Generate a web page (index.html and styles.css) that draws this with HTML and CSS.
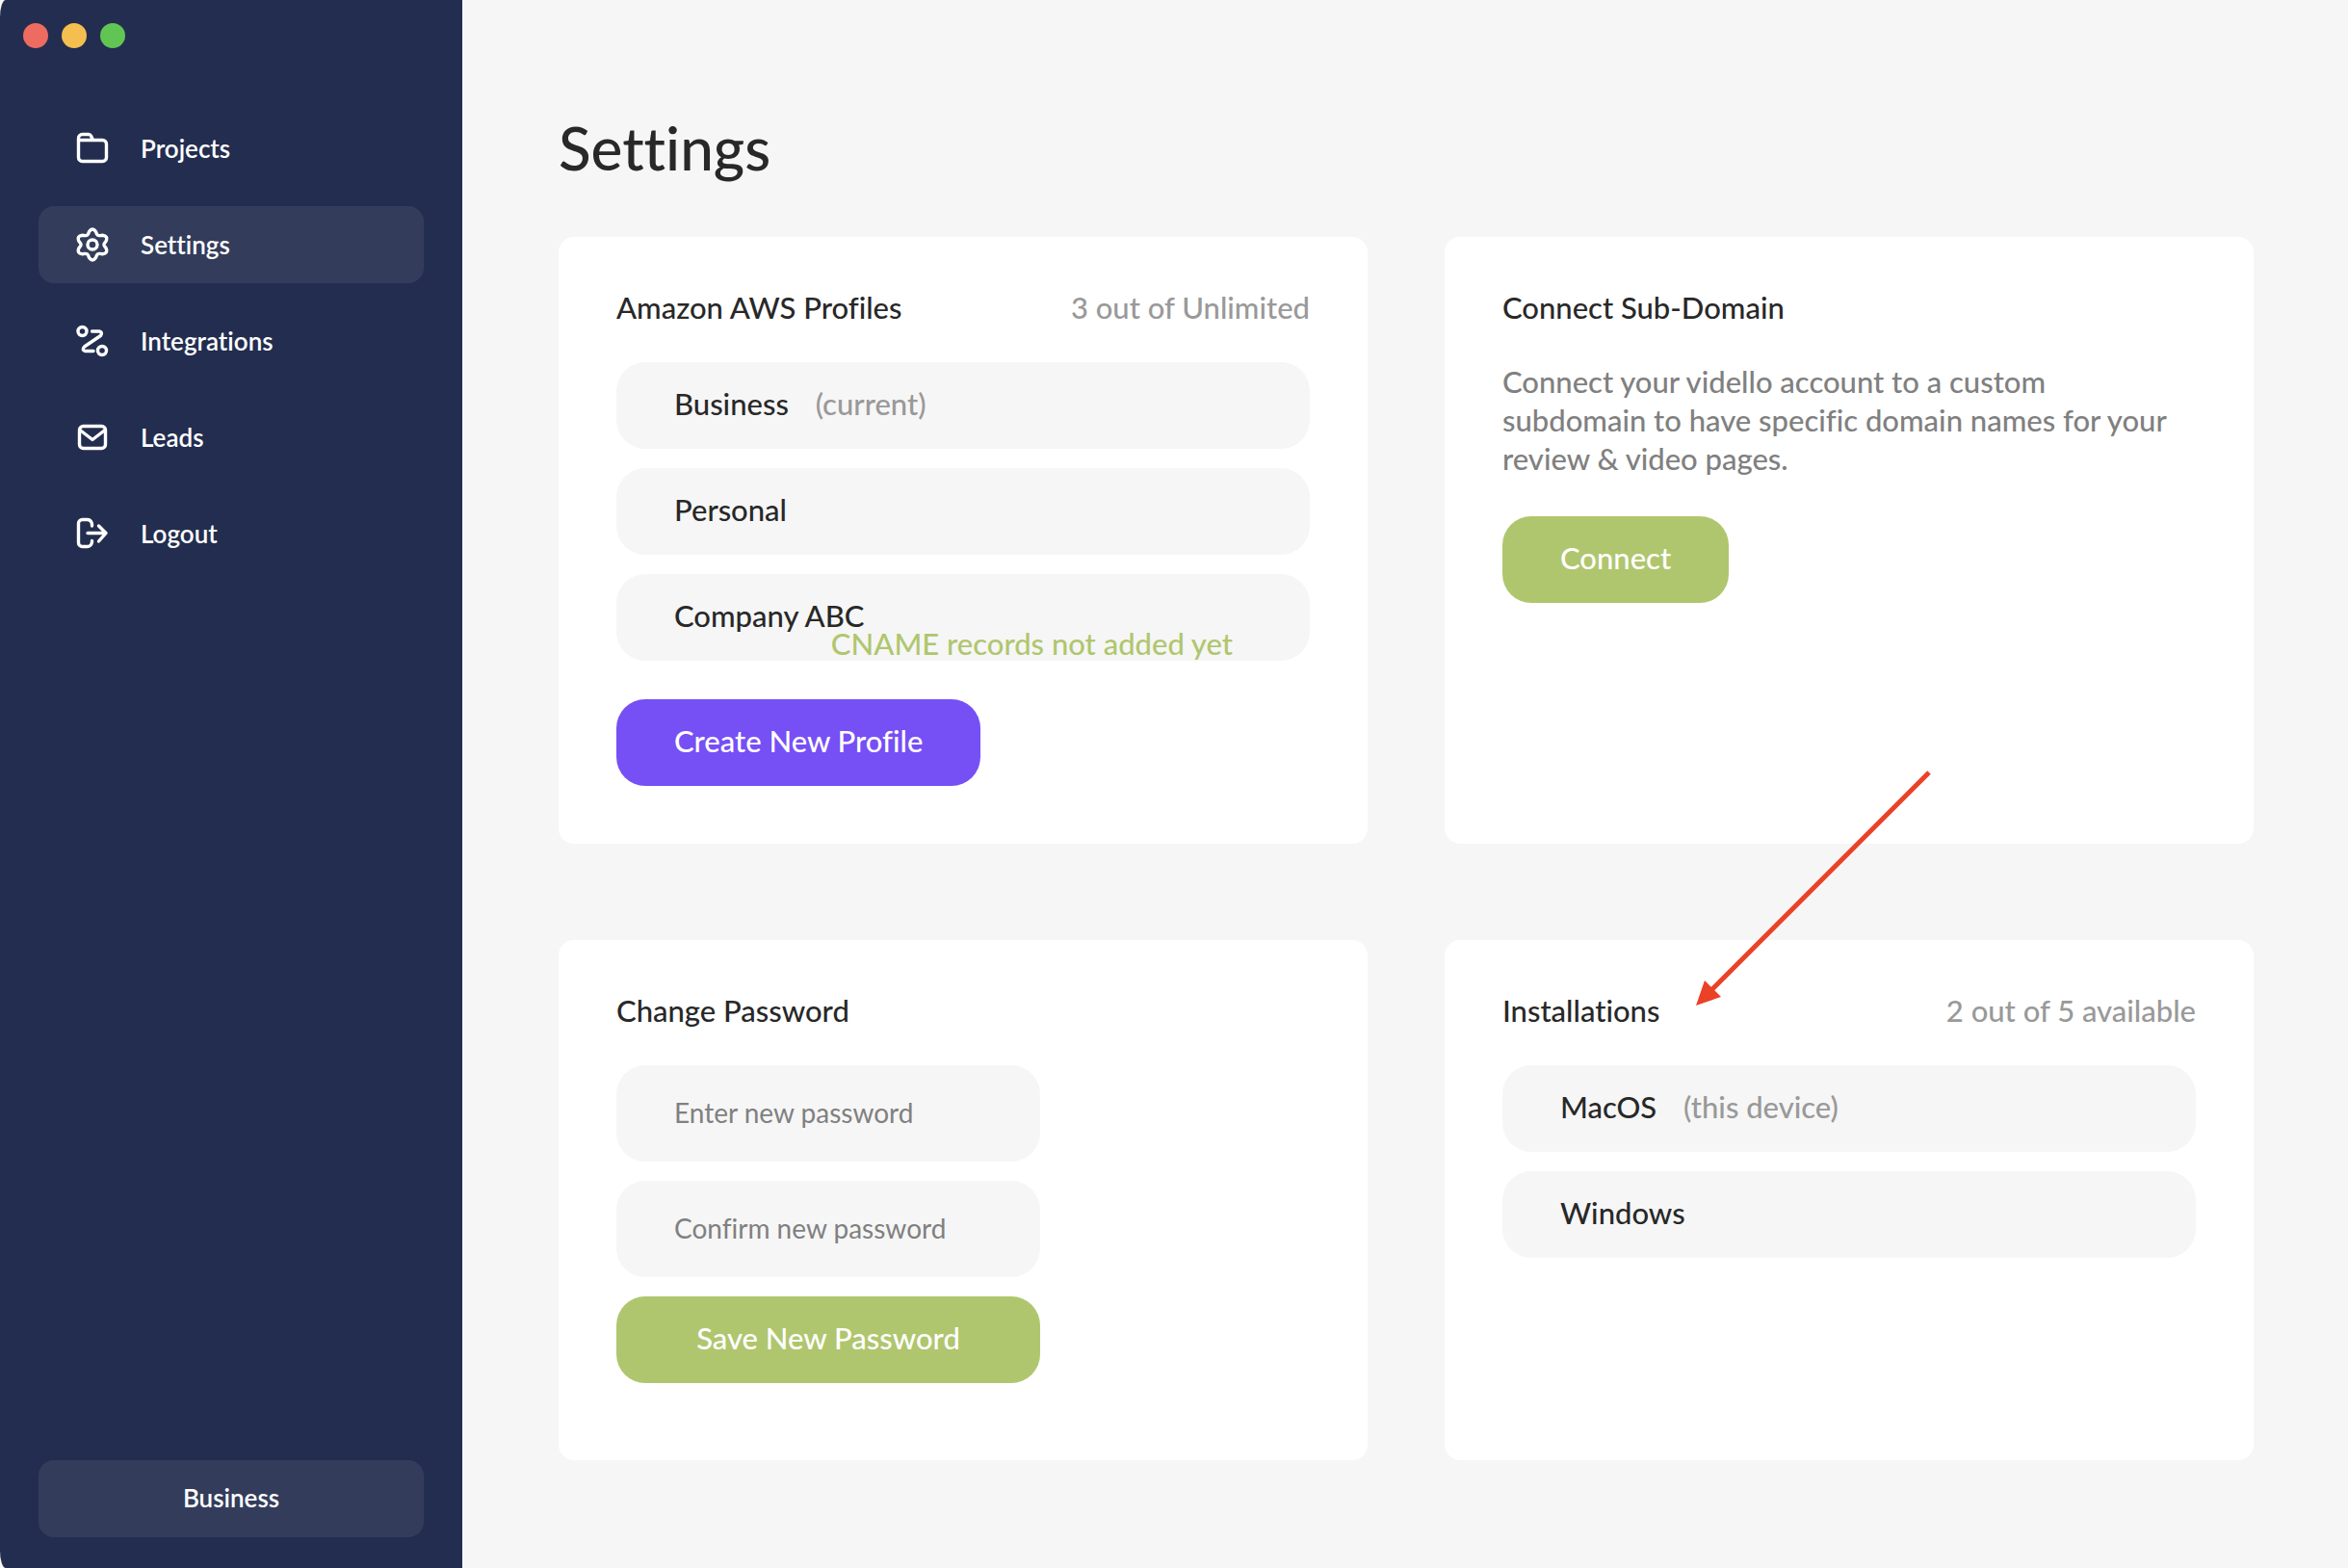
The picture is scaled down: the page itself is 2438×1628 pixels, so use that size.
FILE: index.html
```html
<!DOCTYPE html>
<html lang="en">
<head>
    <meta charset="UTF-8">
    <meta name="viewport" content="width=device-width, initial-scale=1.0">
    <title>Settings</title>
    <link rel="stylesheet" href="styles.css">
</head>
<body>

<div class="app">
    <!-- Sidebar -->
    <aside class="sidebar">
        <div class="window-controls">
            <span class="dot dot-close"></span>
            <span class="dot dot-minimize"></span>
            <span class="dot dot-zoom"></span>
        </div>

        <nav class="menu">
            <a class="menu-item" href="#projects">
                <svg class="icon" viewBox="0 0 36 36">
                    <path d="M3.500 12.500V7.500a4 4 0 0 1 4-4H14a3 3 0 0 1 2.500 1.500L18.500 9.500M3.500 9.500H28.500a4 4 0 0 1 4 4V27.500a4 4 0 0 1-4 4H7.500a4 4 0 0 1-4-4V9.500"/>
                </svg>
                Projects
            </a>
            <a class="menu-item active" href="#settings">
                <svg class="icon" viewBox="0 0 36 36">
                    <circle cx="18" cy="18" r="5"/>
                    <path d="M14.500 4.500Q18-.500 21.500 4.500L22.500 7.200Q23.500 8.800 25.500 8.600L28.500 8.300Q34.500 9 32 14.500L30.500 16.500Q29.500 18 30.500 19.500L32 21.500Q34.500 27 28.500 27.700L25.500 27.400Q23.500 27.200 22.500 28.800L21.500 31.500Q18 36.500 14.500 31.500L13.500 28.800Q12.500 27.200 10.500 27.400L7.500 27.700Q1.500 27 4 21.500L5.500 19.500Q6.500 18 5.500 16.500L4 14.500Q1.500 9 7.500 8.300L10.500 8.600Q12.500 8.800 13.500 7.200Z"/>
                </svg>
                Settings
            </a>
            <a class="menu-item" href="#integrations">
                <svg class="icon" viewBox="0 0 36 36">
                    <circle cx="7.500" cy="8" r="4.500"/>
                    <circle cx="28" cy="28" r="4.500"/>
                    <path d="M17.500 8H25q4 1 1.500 4.500L9.500 24q-3 3.500 1 4.500H19"/>
                </svg>
                Integrations
            </a>
            <a class="menu-item" href="#leads">
                <svg class="icon" viewBox="0 0 36 36">
                    <rect x="4.500" y="6.500" width="27" height="23" rx="4"/>
                    <path d="M5 10.500L18 20.500L31 10.500"/>
                </svg>
                Leads
            </a>
            <a class="menu-item" href="#logout">
                <svg class="icon" viewBox="0 0 36 36">
                    <path d="M17.500 10V8q-1-4.500-5-4.500H7.500a4 4 0 0 0-4 4V27.500a4 4 0 0 0 4 4H12.500q4 0 5-4.500V25.500M13 17.500H32M24.500 10L32 17.500L24.500 26"/>
                </svg>
                Logout
            </a>
        </nav>

        <button class="profile-btn" type="button">Business</button>
    </aside>

    <!-- Settings page -->
    <main class="content">
        <h1>Settings</h1>

        <div class="cards">
            <section class="card">
                <div class="card-head">
                    <h2>Amazon AWS Profiles</h2>
                    <span class="count">3 out of Unlimited</span>
                </div>
                <ul class="list">
                    <li>Business <span class="note">(current)</span></li>
                    <li>Personal</li>
                    <li>Company ABC</li>
                </ul>
                <p class="toast">CNAME records not added yet</p>
                <button class="btn btn-purple" type="button">Create New Profile</button>
            </section>

            <section class="card">
                <div class="card-head">
                    <h2>Connect Sub-Domain</h2>
                </div>
                <p class="description">Connect your vidello account to a custom subdomain to have specific domain names for your review &amp; video pages.</p>
                <button class="btn" type="button">Connect</button>
            </section>

            <section class="card">
                <div class="card-head">
                    <h2>Change Password</h2>
                </div>
                <form class="password-form">
                    <input type="password" placeholder="Enter new password" aria-label="Enter new password">
                    <input type="password" placeholder="Confirm new password" aria-label="Confirm new password">
                    <button class="btn" type="submit">Save New Password</button>
                </form>
            </section>

            <section class="card">
                <div class="card-head">
                    <h2>Installations</h2>
                    <span class="count">2 out of 5 available</span>
                </div>
                <ul class="list">
                    <li>MacOS <span class="note">(this device)</span></li>
                    <li>Windows</li>
                </ul>
                <!-- Arrow pointing at the installations title -->
                <svg class="arrow" viewBox="0 0 250 250">
                    <path class="arrow-line" d="M246 4L18 232"/>
                    <path class="arrow-head" d="M4 246L13 220L30 237Z"/>
                </svg>
            </section>
        </div>
    </main>
</div>

</body>
</html>
```

FILE: styles.css
```css
* {
    box-sizing: border-box;
}

body {
    margin: 0;
    font-family: Lato, 'Open Sans', sans-serif;
    font-size: 31px;
    font-weight: 500;
    font-variant-ligatures: none;
    line-height: 40px;
    color: #282828;
    background-color: #f6f6f6;
}

h1, h2, p, ul {
    margin: 0;
    padding: 0;
    font-weight: 500;
}

button, input {
    font-family: inherit;
    font-variant-ligatures: inherit;
    border: none;
}

.app {
    display: flex;
    min-height: 100vh;
}

/* Sidebar */
.sidebar {
    display: flex;
    flex-direction: column;
    flex: none;
    width: 480px;
    padding: 24px 40px 32px;
    background-color: #232d4f;
    border-radius: 6px 0 0 6px / 18px 0 0 18px;
}

.window-controls {
    display: flex;
    gap: 14px;
    margin-left: -16px;
    margin-bottom: 64px;
}

.dot {
    width: 26px;
    height: 26px;
    border-radius: 50%;
}

.dot-close {
    background-color: #ed6b60;
}

.dot-minimize {
    background-color: #f5bf4f;
}

.dot-zoom {
    background-color: #61c554;
}

.menu {
    display: flex;
    flex-direction: column;
    gap: 20px;
}

.menu-item {
    display: flex;
    align-items: center;
    gap: 32px;
    height: 80px;
    padding: 0 38px;
    border-radius: 16px;
    color: white;
    font-size: 26px;
    font-weight: 600;
    line-height: 32px;
    text-decoration: none;
}

.active, .profile-btn {
    background-color: #333d5b;
}

.icon {
    width: 36px;
    height: 36px;
    fill: none;
    stroke: white;
    stroke-width: 3.4;
    stroke-linecap: round;
    stroke-linejoin: round;
}

.profile-btn {
    height: 80px;
    margin-top: auto;
    padding: 0 0 3px;
    border-radius: 16px;
    color: white;
    font-size: 26px;
    font-weight: 600;
    cursor: pointer;
}

/* Main content */
.content {
    flex: 1;
    padding: 112px 98px 100px 100px;
}

h1 {
    margin-bottom: 52px;
    font-size: 62px;
    line-height: 82px;
}

.cards {
    display: grid;
    grid-template-columns: 1fr 1fr;
    gap: 100px 80px;
}

.card {
    position: relative;
    padding: 60px;
    border-radius: 16px;
    background-color: white;
}

.card:nth-child(n+3) {
    padding-bottom: 80px;
}

.card-head {
    display: flex;
    justify-content: space-between;
    margin-bottom: 44px;
    line-height: 26px;
}

h2 {
    font-size: 31px;
}

.count, .note {
    color: #999999;
}

.list {
    display: flex;
    flex-direction: column;
    gap: 20px;
    list-style: none;
}

.list li {
    padding: 23px 60px 27px;
    border-radius: 30px;
    background-color: #f6f6f6;
}

.note {
    margin-left: 20px;
}

.description {
    padding-right: 20px;
    color: #808080;
}

.btn {
    height: 90px;
    margin-top: 40px;
    padding: 0 60px 4px;
    border-radius: 30px;
    background-color: #b0c66e;
    color: white;
    font-size: 31px;
    font-weight: 500;
    cursor: pointer;
}

.btn-purple {
    background-color: #764ff5;
}

/* Message shown over the profile list */
.toast {
    position: absolute;
    right: 140px;
    bottom: 188px;
    color: #b0c66e;
}

.password-form {
    display: flex;
    flex-direction: column;
    gap: 20px;
    width: 440px;
}

.password-form input {
    height: 100px;
    padding: 0 60px 2px;
    border-radius: 30px;
    background-color: #f6f6f6;
    font-size: 28px;
    font-weight: 400;
}

.password-form input::placeholder {
    color: #808080;
}

.password-form .btn {
    margin-top: 0;
}

/* Arrow */
.arrow {
    position: absolute;
    left: 257px;
    top: -178px;
    width: 250px;
    height: 250px;
}

.arrow-line {
    stroke: #eb4126;
    stroke-width: 5;
}

.arrow-head {
    fill: #eb4126;
}
```
